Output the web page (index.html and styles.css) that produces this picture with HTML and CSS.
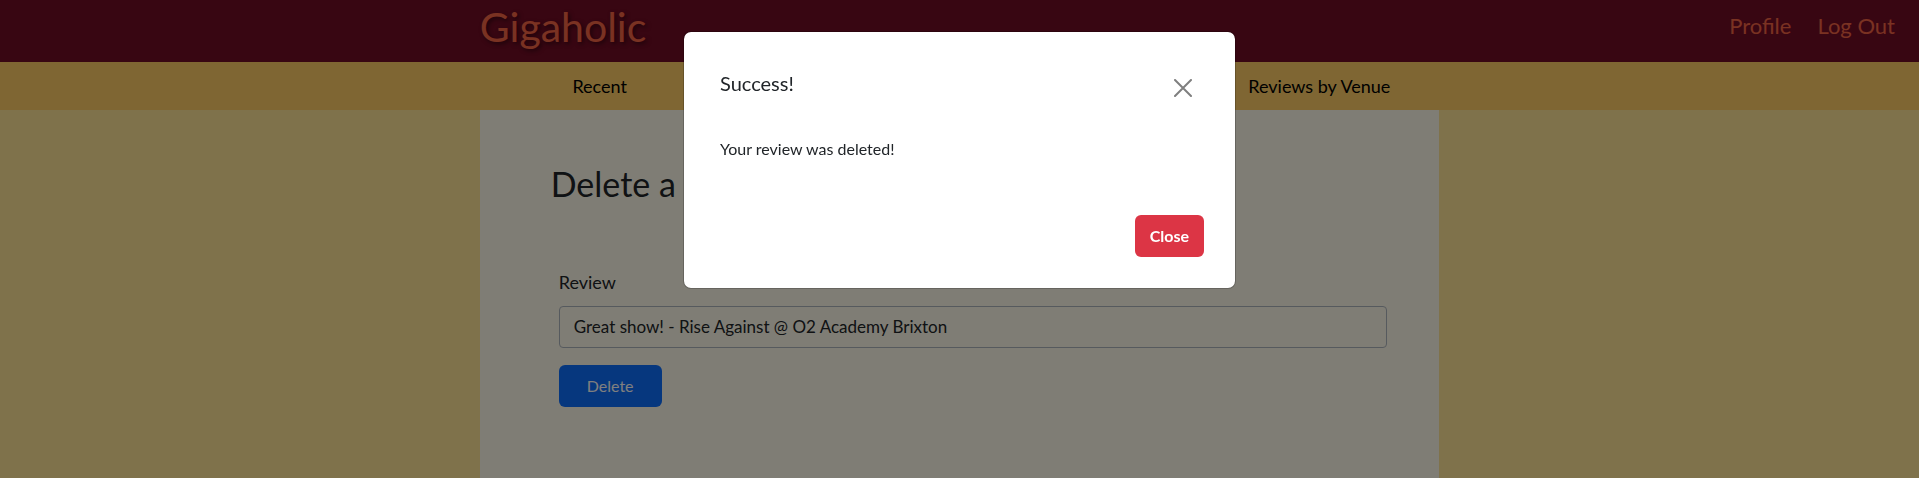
FILE: index.html
```html
<!DOCTYPE html>
<html lang="en">
<head>
<meta charset="utf-8">
<title>Gigaholic</title>
<link rel="stylesheet" href="styles.css">
</head>
<body>
<header class="header">
  <a class="brand" href="#">Gigaholic</a>
  <div class="account">
    <a href="#">Profile</a>
    <a href="#">Log Out</a>
  </div>
</header>
<nav class="nav">
  <div class="nav-inner">
    <a href="#">Recent</a>
    <a class="nav-last" href="#">Reviews by Venue</a>
  </div>
</nav>
<main class="content">
  <h1 class="title">Delete a Review</h1>
  <form class="form">
    <label class="label" for="review">Review</label>
    <select class="select" id="review">
      <option>Great show! - Rise Against @ O2 Academy Brixton</option>
    </select>
    <button class="btn btn-primary" type="button">Delete</button>
  </form>
</main>
<div class="backdrop">
  <div class="modal" role="dialog" aria-modal="true" aria-labelledby="modal-title">
    <div class="modal-header">
      <h2 class="modal-title" id="modal-title">Success!</h2>
      <button class="dismiss" type="button" aria-label="Dismiss">
        <svg viewBox="0 0 18 18" width="18" height="18" aria-hidden="true"><path d="M1 1 17 17M17 1 1 17" fill="none" stroke="currentColor" stroke-width="2" stroke-linecap="round"/></svg>
      </button>
    </div>
    <p class="modal-body">Your review was deleted!</p>
    <div class="modal-footer">
      <button class="btn btn-danger" type="button">Close</button>
    </div>
  </div>
</div>
</body>
</html>
```
FILE: styles.css
```css
* { box-sizing: border-box; }
body {
  margin: 0;
  min-height: 100vh;
  display: flex;
  flex-direction: column;
  background: #ffe496;
  color: #212529;
  font: 16px/24px "Gill Sans MT", "Gill Sans", Lato, sans-serif;
}
a { text-decoration: none; }
h1, h2, p { margin: 0; font-weight: 400; }
.header {
  display: flex;
  justify-content: space-between;
  align-items: flex-start;
  height: 62px;
  padding: 0 24px 0 25%;
  background: #700c24;
}
.header a { color: #f46444; }
.brand {
  font-size: 41px;
  line-height: 54px;
  text-shadow: 2px 2px 4px rgba(0, 0, 0, 0.5);
}
.account {
  display: flex;
  gap: 26px;
  font-size: 22px;
  line-height: 52px;
}
.nav { background: #fc6; }
.nav-inner {
  display: grid;
  grid-template-columns: repeat(4, 1fr);
  width: 50%;
  margin: 0 auto;
  text-align: center;
  font-size: 18px;
  line-height: 48px;
}
.nav-inner a { color: #000; }
.nav-last { grid-column: 4; }
.content {
  flex: 1;
  width: 50%;
  margin: 0 auto;
  padding: 48px 52px 48px 71px;
  background: #fffaea;
}
.title { font-size: 34px; line-height: 52px; }
.form {
  display: flex;
  flex-direction: column;
  align-items: flex-start;
  margin-top: 60px;
  padding-left: 8px;
}
.label { font-size: 18px; line-height: 24px; margin-bottom: 12px; }
.select {
  appearance: none;
  width: 100%;
  height: 42px;
  padding: 0 14px;
  border: 1px solid #adb5bd;
  border-radius: 4px;
  background: transparent;
  color: #212529;
  font: inherit;
  font-size: 17px;
}
.btn {
  height: 42px;
  border: 0;
  border-radius: 6px;
  color: #fff;
  font: inherit;
}
.btn-primary { margin-top: 17px; padding: 0 28px; background: #0d6efd; }
.btn-danger { padding: 0 15px; background: #dc3545; font-weight: 700; }
.backdrop {
  position: fixed;
  inset: 0;
  padding: 31px 16px;
  background: rgba(0, 0, 0, 0.5);
}
.modal {
  max-width: 553px;
  margin: 0 auto;
  padding: 36px 31px 31px 36px;
  border: 1px solid rgba(0, 0, 0, 0.2);
  border-radius: 8px;
  background: #fff;
  background-clip: padding-box;
}
.modal-header {
  display: flex;
  justify-content: space-between;
  align-items: flex-start;
}
.modal-title { font-size: 20px; line-height: 30px; }
.dismiss {
  display: flex;
  padding: 11px 12px 7px;
  border: 0;
  background: none;
  color: #7f7f7f;
}
.modal-body { margin: 33px 0 32px; padding-bottom: 22px; }
.modal-footer { display: flex; justify-content: flex-end; }
```
